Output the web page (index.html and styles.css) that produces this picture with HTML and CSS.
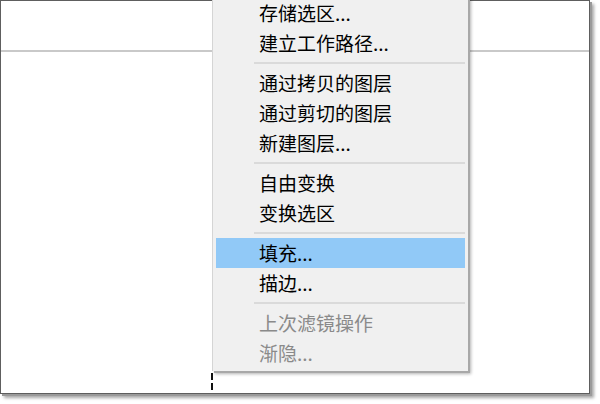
FILE: index.html
```html
<!DOCTYPE html>
<html lang="zh-CN">
<head>
<meta charset="utf-8">
<link rel="stylesheet" href="styles.css">
</head>
<body>
<div class="frame">
  <div class="ruler"></div>
  <div class="ants">
    <span class="dash"></span>
    <span class="dash"></span>
  </div>
  <div class="menu">
    <div class="item">存储选区...</div>
    <div class="item">建立工作路径...</div>
    <div class="sep"></div>
    <div class="item">通过拷贝的图层</div>
    <div class="item">通过剪切的图层</div>
    <div class="item">新建图层...</div>
    <div class="sep"></div>
    <div class="item">自由变换</div>
    <div class="item">变换选区</div>
    <div class="sep"></div>
    <div class="item active">填充...</div>
    <div class="item">描边...</div>
    <div class="sep"></div>
    <div class="item disabled">上次滤镜操作</div>
    <div class="item disabled">渐隐...</div>
  </div>
</div>
</body>
</html>
```

FILE: styles.css
```css
html, body {
  margin: 0;
  padding: 0;
  background: #ffffff;
  width: 600px;
  height: 404px;
  overflow: hidden;
  font-family: "Noto Sans CJK SC", "Noto Sans", sans-serif;
}

.frame {
  position: relative;
  box-sizing: border-box;
  width: 590px;
  height: 394px;
  background: #ffffff;
  border: 1px solid #5e5e5e;
  box-shadow: 2px 2px 0 #9a9a9a, 4px 4px 3px rgba(0, 0, 0, 0.35);
}

.ruler {
  height: 49px;
  border-bottom: 2px solid #c9c9c9;
}

.ants {
  position: absolute;
  left: 210px;
  top: 372px;
  display: flex;
  flex-direction: column;
  gap: 3px;
}

.dash {
  display: block;
  width: 2px;
  height: 7px;
  background: #111;
}

.menu {
  position: absolute;
  left: 211px;
  top: -6px;
  box-sizing: border-box;
  width: 256px;
  padding: 3px 3px 3px 3px;
  background: #f0f0f0;
  border-left: 1px solid #d5d5d5;
  box-shadow: 2px 2px 0 #a8a8a8, 3px 3px 3px rgba(0, 0, 0, 0.3);
}

.item {
  height: 30px;
  line-height: 30px;
  padding-left: 43px;
  font-size: 19px;
  font-weight: 400;
  color: #000;
  white-space: nowrap;
}

.item.active {
  background: #91c9f7;
}

.item.disabled {
  color: #8a8a8a;
}

.sep {
  height: 2px;
  margin: 4px 0 4px 38px;
  background: #dadada;
}
```
